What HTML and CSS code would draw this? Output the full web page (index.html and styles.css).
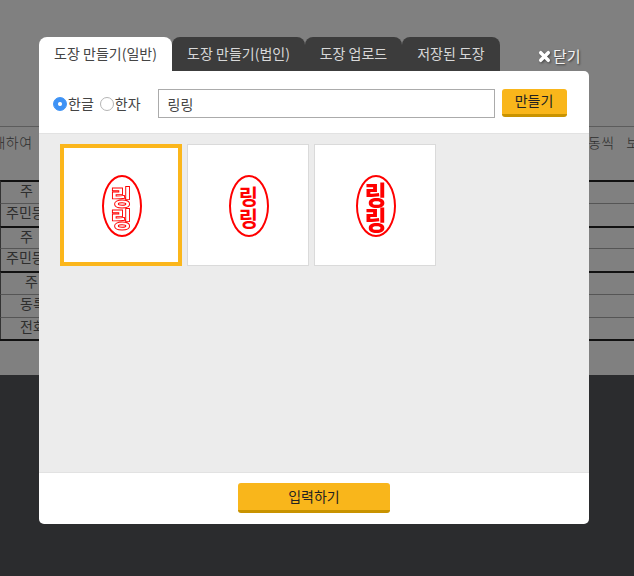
FILE: index.html
```html
<!doctype html>
<html>

<head>
  <meta charset="UTF-8" />
  <title>도장 만들기</title>
  <link rel="stylesheet" href="styles.css">
</head>

<body>
  <!-- page behind the dimmed overlay -->
  <div class="page">
    <div class="notes">
      <span class="note-left">기재하여</span>
      <span class="note-right">1동씩 보관</span>
    </div>
    <div class="notes notes-second"><span></span><span class="note-mark">!</span></div>
    <table class="doc-table">
      <tr class="thick"><td class="label">주 소</td><td></td></tr>
      <tr><td class="label wide">주민등록번호</td><td></td></tr>
      <tr class="thick short"><td class="label">주 소</td><td></td></tr>
      <tr><td class="label wide">주민등록번호</td><td></td></tr>
      <tr class="thick"><td class="label inset">주 소</td><td></td></tr>
      <tr><td class="label">동록번호</td><td></td></tr>
      <tr class="short"><td class="label">전화번호</td><td></td></tr>
    </table>
  </div>

  <div class="modal">
    <div class="tabs">
      <div class="tab active">도장 만들기(일반)</div>
      <div class="tab tab-wide">도장 만들기(법인)</div>
      <div class="tab tab-upload">도장 업로드</div>
      <div class="tab tab-saved">저장된 도장</div>
      <div class="close">
        <svg class="close-icon" viewBox="0 0 12 12" xmlns="http://www.w3.org/2000/svg">
          <path d="M2.5,2.5L9.5,9.5M9.5,2.5L2.5,9.5" stroke="#FFFFFF" stroke-width="3.2" stroke-linecap="round" />
        </svg>
        <span>닫기</span>
      </div>
    </div>

    <div class="panel">
      <div class="form-row">
        <label class="radio"><input type="radio" name="lang" checked>한글</label>
        <label class="radio"><input type="radio" name="lang">한자</label>
        <input class="name-input" type="text" value="링링">
        <button class="btn btn-make">만들기</button>
      </div>

      <div class="stamps">
        <div class="stamp selected">
          <div class="oval outline"><span>링</span><span>링</span></div>
        </div>
        <div class="stamp">
          <div class="oval medium"><span>링</span><span>링</span></div>
        </div>
        <div class="stamp">
          <div class="oval heavy"><span>링</span><span>링</span></div>
        </div>
      </div>

      <div class="footer">
        <button class="btn btn-submit">입력하기</button>
      </div>
    </div>
  </div>
</body>

</html>
```

FILE: styles.css
```css
html,
body {
  margin: 0;
  padding: 0;
  height: 576px;
  overflow: hidden;
}

body {
  background-color: #2B2C2E;
  font-family: "Noto Sans CJK KR", "Noto Sans", sans-serif;
  position: relative;
}

.page {
  height: 375px;
  box-sizing: border-box;
  padding-top: 126px;
  background-color: #808080;
  color: #2E2E2E;
  font-size: 14px;
  overflow: hidden;
}

.notes {
  display: flex;
  justify-content: space-between;
  height: 21px;
  line-height: 20px;
  padding-top: 5px;
  white-space: nowrap;
  border-top: 1px solid #5C5C5C;
}

.notes-second {
  border-top: 0;
  padding-top: 0;
  height: 27px;
  line-height: 20px;
}

.note-left {
  margin-left: -21px;
  letter-spacing: 0.5px;
  font-weight: 300;
}

.note-right {
  margin-right: -19px;
  word-spacing: 8px;
  letter-spacing: 0.5px;
  font-weight: 300;
}

.note-mark {
  margin-right: 44px;
}

.doc-table {
  width: 100%;
  border-collapse: separate;
  border-spacing: 0;
  border-bottom: 2px solid #111111;
}

.doc-table td {
  height: 23px;
  box-sizing: border-box;
  padding: 0;
  border-top: 1px solid #555555;
  font-size: 14px;
  line-height: 17px;
  vertical-align: top;
  white-space: nowrap;
}

.doc-table .short td {
  height: 22px;
}

.doc-table .thick td {
  border-top: 2px solid #111111;
}

.doc-table .label {
  width: 60px;
  max-width: 60px;
  overflow: hidden;
  padding-left: 19px;
  word-spacing: 12px;
  border-left: 1px solid #333333;
}

.doc-table .wide {
  padding-left: 5px;
}

.doc-table .inset {
  padding-left: 24px;
}

.modal {
  position: absolute;
  top: 37px;
  left: 39px;
  width: 550px;
}

.tabs {
  display: flex;
  height: 34px;
}

.tab {
  width: 133px;
  height: 34px;
  line-height: 32px;
  text-align: center;
  font-size: 14px;
  color: #D8D8D8;
  background-color: #3C3C3C;
  border-radius: 8px 8px 0 0;
  white-space: nowrap;
}

.tab.active {
  color: #444444;
  background-color: #FFFFFF;
}

.tab-upload {
  width: 97px;
}

.tab-saved {
  width: 98px;
}

.close {
  display: flex;
  align-items: center;
  gap: 2px;
  margin-left: 38px;
  margin-top: 7px;
  height: 22px;
  font-size: 15px;
  color: #F2F2F2;
  text-shadow: 1px 1px 2px #333333;
}

.close-icon {
  width: 13px;
  height: 13px;
  margin-top: 3px;
  filter: drop-shadow(1px 1px 1px #444444);
}

.panel {
  height: 453px;
  display: flex;
  flex-direction: column;
  background-color: #FFFFFF;
  border-radius: 0 5px 5px 5px;
  overflow: hidden;
}

.form-row {
  display: flex;
  align-items: flex-start;
  height: 63px;
  flex-shrink: 0;
  box-sizing: border-box;
  padding: 18px 0 0 14px;
  border-bottom: 1px solid #E2E2E2;
}

.radio {
  display: flex;
  align-items: center;
  height: 27px;
  margin-right: 6px;
  font-size: 14px;
  color: #444444;
}

.radio input {
  appearance: none;
  width: 14px;
  height: 14px;
  margin: 3px 1px 0 0;
  border: 1px solid #B5B5B5;
  border-radius: 50%;
  background-color: #FFFFFF;
}

.radio input:checked {
  border: 1px solid #3E92F5;
  background: radial-gradient(circle, #FFFFFF 0, #FFFFFF 1.5px, #3E92F5 2.5px);
}

.name-input {
  width: 337px;
  height: 29px;
  box-sizing: border-box;
  margin-left: 11px;
  padding: 0 9px;
  border: 1px solid #ABABAB;
  font-family: inherit;
  font-size: 14px;
  color: #444444;
  outline: none;
}

.btn {
  display: block;
  padding: 0 0 2px;
  border: 0;
  border-bottom: 3px solid #C99300;
  border-radius: 3px;
  background-color: #F9B61B;
  font-family: inherit;
  color: #222222;
}

.btn-make {
  width: 65px;
  height: 28px;
  margin-left: 7px;
  padding-bottom: 4px;
  font-size: 14px;
  line-height: 20px;
}

.stamps {
  flex: 1;
  display: flex;
  align-items: flex-start;
  gap: 5px;
  padding: 10px 21px;
  background-color: #ECECEC;
}

.stamp {
  width: 122px;
  height: 122px;
  box-sizing: border-box;
  display: flex;
  align-items: center;
  justify-content: center;
  padding: 1px 0 0 1px;
  background-color: #FFFFFF;
  border: 1px solid #DADADA;
}

.stamp.selected {
  border: 4px solid #FBB61B;
}

.oval {
  width: 40px;
  height: 62px;
  box-sizing: border-box;
  display: flex;
  flex-direction: column;
  align-items: center;
  justify-content: center;
  border: 2px solid #FF0000;
  border-radius: 50%;
  color: #FF0000;
  overflow: hidden;
}

.oval span {
  display: block;
  font-size: 21px;
  line-height: 22px;
  font-weight: 700;
}

.oval.outline span {
  font-size: 22px;
  line-height: 22px;
  font-weight: 900;
  color: #FFFFFF;
  -webkit-text-stroke: 0.9px #FF0000;
  transform: scale(1.05, 1);
}

.oval.heavy span {
  font-size: 24px;
  line-height: 25px;
  font-weight: 900;
  transform: scale(1, 1.08);
}

.footer {
  height: 52px;
  flex-shrink: 0;
  display: flex;
  justify-content: center;
  align-items: flex-start;
  padding-top: 10px;
  box-sizing: border-box;
  border-top: 1px solid #E2E2E2;
}

.btn-submit {
  width: 152px;
  height: 30px;
  font-size: 14px;
  line-height: 22px;
}
```
